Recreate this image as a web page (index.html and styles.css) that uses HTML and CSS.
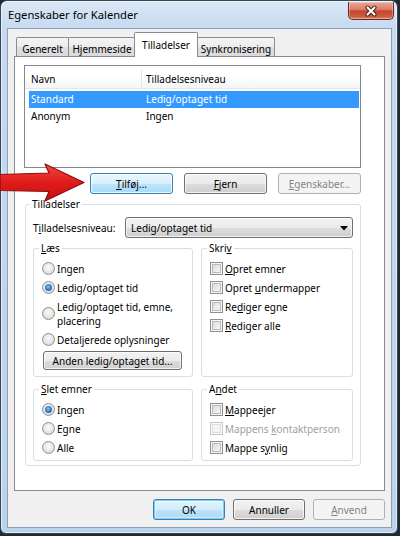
FILE: index.html
```html
<!DOCTYPE html>
<html lang="da">
<head>
<meta charset="utf-8">
<title>Egenskaber for Kalender</title>
<link rel="stylesheet" href="styles.css">
</head>
<body>
<div class="window">
  <div class="titlebar">
    <span class="title">Egenskaber for Kalender</span>
    <div class="close">
      <svg width="14" height="12" viewBox="0 0 14 12">
        <path d="M3.5 2.5 L10.5 9.5 M10.5 2.5 L3.5 9.5" stroke="#4a1710" stroke-width="4" stroke-linecap="round"/>
        <path d="M3.5 2.5 L10.5 9.5 M10.5 2.5 L3.5 9.5" stroke="#ffffff" stroke-width="2.2" stroke-linecap="round"/>
      </svg>
    </div>
  </div>
  <div class="client">
    <div class="tabs">
      <div class="tab t1">Generelt</div>
      <div class="tab t2">Hjemmeside</div>
      <div class="tab t3 active">Tilladelser</div>
      <div class="tab t4">Synkronisering</div>
    </div>
    <div class="panel">
      <div class="list">
        <div class="list-head">
          <span class="hcol1">Navn</span>
          <span class="hcol2">Tilladelsesniveau</span>
        </div>
        <div class="rows">
          <div class="row selected"><span class="col1">Standard</span><span class="col2">Ledig/optaget tid</span></div>
          <div class="row"><span class="col1">Anonym</span><span class="col2">Ingen</span></div>
        </div>
      </div>
      <div class="list-buttons">
        <span class="btn hot"><span><u>T</u>ilføj...</span></span>
        <span class="btn"><span><u>F</u>jern</span></span>
        <span class="btn disabled"><span><u>E</u>genskaber...</span></span>
      </div>
      <fieldset class="group perms">
        <legend>Tilladelser</legend>
        <div class="level-row">
          <span class="level-label">T<u>i</u>lladelsesniveau:</span>
          <div class="select">
            <span>Ledig/optaget tid</span>
            <svg class="caret" width="8" height="5" viewBox="0 0 8 5"><path d="M0 0 H8 L4 4.5 Z" fill="#000"/></svg>
          </div>
        </div>
        <div class="cols">
          <fieldset class="group sub les">
            <legend><u>L</u>æs</legend>
            <div class="opt"><span class="radio"></span><span>Ingen</span></div>
            <div class="opt"><span class="radio on"></span><span>Ledig/optaget tid</span></div>
            <div class="opt multi"><span class="radio"></span><span class="ml">Ledig/optaget tid, emne,<br>placering</span></div>
            <div class="opt"><span class="radio"></span><span>Detaljerede oplysninger</span></div>
            <span class="btn other"><span>Anden ledig/optaget tid...</span></span>
          </fieldset>
          <fieldset class="group sub">
            <legend>Skri<u>v</u></legend>
            <div class="opt"><span class="check"></span><span><u>O</u>pret emner</span></div>
            <div class="opt"><span class="check"></span><span>Opret <u>u</u>ndermapper</span></div>
            <div class="opt"><span class="check"></span><span>Re<u>d</u>iger egne</span></div>
            <div class="opt"><span class="check"></span><span><u>R</u>ediger alle</span></div>
          </fieldset>
        </div>
        <div class="cols second">
          <fieldset class="group sub low">
            <legend><u>S</u>let emner</legend>
            <div class="opt"><span class="radio on"></span><span>Ingen</span></div>
            <div class="opt"><span class="radio"></span><span>Egne</span></div>
            <div class="opt"><span class="radio"></span><span>Alle</span></div>
          </fieldset>
          <fieldset class="group sub low">
            <legend>A<u>n</u>det</legend>
            <div class="opt"><span class="check"></span><span><u>M</u>appeejer</span></div>
            <div class="opt off"><span class="check"></span><span>Mappens <u>k</u>ontaktperson</span></div>
            <div class="opt"><span class="check"></span><span>Mappe s<u>y</u>nlig</span></div>
          </fieldset>
        </div>
      </fieldset>
    </div>
    <div class="dialog-buttons">
      <span class="btn default"><span>OK</span></span>
      <span class="btn"><span>Annuller</span></span>
      <span class="btn disabled"><span><u>A</u>nvend</span></span>
    </div>
  </div>
  <svg class="arrow" width="88" height="42" viewBox="0 0 88 42">
    <defs>
      <linearGradient id="ag" x1="0" y1="0" x2="0" y2="1">
        <stop offset="0" stop-color="#f04a3e"/>
        <stop offset="0.5" stop-color="#e01b1b"/>
        <stop offset="1" stop-color="#c41010"/>
      </linearGradient>
    </defs>
    <polygon points="0,12.5 49,11 45,2 84,20.5 45,39 49,29.5 0,28.5" fill="url(#ag)" stroke="#8d0d0d" stroke-width="1.2" stroke-linejoin="round"/>
  </svg>
</div>
</body>
</html>
```
FILE: styles.css
```css
* { box-sizing: border-box; }
html, body { margin: 0; padding: 0; }
body {
  width: 400px;
  height: 536px;
  overflow: hidden;
  background: #1f2a35;
  font-family: "Noto Sans", "Open Sans", sans-serif;
  font-size: 10px;
  color: #000;
  white-space: nowrap;
}
u { text-decoration: underline; text-underline-offset: 1px; }

.window {
  position: relative;
  width: 398px;
  height: 534px;
  border: 1px solid #34475c;
  border-radius: 7px 7px 6px 6px;
  background: linear-gradient(180deg, #dbe8f6 0, #c6d9ef 28px, #bdd3ec 100%);
  box-shadow: inset 0 0 0 1px rgba(255, 255, 255, 0.55);
  padding: 0 5px 5px 6px;
}

.titlebar {
  height: 27px;
  display: flex;
  align-items: flex-start;
}
.title {
  font-size: 11.2px;
  line-height: 16px;
  padding: 6px 0 0 1px;
  color: #000;
}
.close {
  margin: 1px -2px 0 auto;
  width: 46px;
  height: 18px;
  border: 1px solid #6b2a21;
  border-top: none;
  border-radius: 0 0 5px 5px;
  background: linear-gradient(180deg, #e9aa98 0, #d97d66 45%, #c4472d 52%, #cf5a3f 85%, #e08a6c 100%);
  box-shadow: inset 0 0 0 1px rgba(255, 255, 255, 0.3);
  display: flex;
  align-items: center;
  justify-content: center;
}

.client {
  height: 500px;
  border: 1px solid #8ba1b9;
  background: #f0f0f0;
  padding: 3px 6px 0 6px;
}

.tabs {
  position: relative;
  z-index: 2;
  display: flex;
  align-items: flex-end;
  height: 24px;
  padding-left: 2px;
}
.tab {
  height: 19px;
  border: 1px solid #898c95;
  border-bottom: none;
  border-radius: 2px 2px 0 0;
  background: linear-gradient(180deg, #f4f4f4 0, #ececec 50%, #e1e1e1 51%, #dadada 100%);
  text-align: center;
  line-height: 16px;
  padding-top: 3px;
  margin-right: -1px;
}
.t1 { width: 53px; }
.t2 { width: 68px; }
.t3 { width: 64px; }
.t4 { width: 78px; }
.tab.active {
  position: relative;
  z-index: 3;
  height: 25px;
  margin-left: -1px;
  margin-bottom: -1px;
  background: #fff;
  padding-top: 4px;
}

.panel {
  position: relative;
  z-index: 1;
  width: 371px;
  height: 435px;
  background: #fff;
  border: 1px solid #898c95;
  padding: 8px 0 0 9px;
}

.list {
  width: 337px;
  height: 103px;
  border: 1px solid #828790;
  background: #fff;
}
.list-head {
  display: flex;
  height: 23px;
  background: linear-gradient(180deg, #ffffff 0, #ffffff 45%, #f4f5f7 100%);
  border-bottom: 1px solid #e6e8eb;
  line-height: 19px;
  padding-top: 4px;
}
.hcol1 {
  width: 117px;
  padding-left: 6px;
  border-right: 1px solid #e3e5e8;
}
.hcol2 { padding-left: 4px; }
.rows { padding: 2px 1px 0 4px; }
.row {
  display: flex;
  height: 17px;
  line-height: 17px;
}
.row.selected { background: #3399ff; color: #fff; }
.col1 { width: 113px; padding-left: 2px; }
.col2 { padding-left: 4px; }

.btn {
  display: flex;
  align-items: center;
  justify-content: center;
  height: 21px;
  border: 1px solid #707070;
  border-radius: 3px;
  background: linear-gradient(180deg, #f2f2f2 0, #ebebeb 50%, #dddddd 51%, #cfcfcf 100%);
  box-shadow: inset 0 0 0 1px rgba(255, 255, 255, 0.75);
  line-height: 14px;
}
.btn.hot {
  border-color: #3c7fb1;
  background: linear-gradient(180deg, #eaf6fd 0, #d9f0fc 50%, #bee6fd 51%, #a7d9f5 100%);
}
.btn.default {
  border-color: #3c7fb1;
  background: linear-gradient(180deg, #e4f4fc 0, #d2ecf9 50%, #bde3f7 51%, #aed9f1 100%);
  box-shadow: inset 0 0 0 1px #6cd3f7, inset 0 0 0 2px rgba(255, 255, 255, 0.4);
}
.btn.disabled {
  border-color: #adb2b5;
  background: #f4f4f4;
  color: #838383;
  box-shadow: none;
}

.list-buttons {
  display: flex;
  justify-content: flex-end;
  gap: 11px;
  width: 337px;
  margin-top: 5px;
}
.list-buttons .btn { width: 83px; }

fieldset {
  margin: 0;
  min-width: 0;
  border: 1px solid #d5dfe5;
  border-radius: 3px;
}
legend {
  padding: 0 2px;
  margin-left: -3px;
  line-height: 14px;
}

.perms {
  width: 336px;
  margin: 3px 0 0 1px;
  padding: 6px 7px 4px 7px;
}
.level-row {
  display: flex;
  align-items: center;
  height: 21px;
}
.level-label { width: 92px; }
.select {
  width: 228px;
  height: 21px;
  display: flex;
  align-items: center;
  padding-left: 5px;
  border: 1px solid #707070;
  border-radius: 3px;
  background: linear-gradient(180deg, #f2f2f2 0, #ebebeb 50%, #dddddd 51%, #cfcfcf 100%);
  box-shadow: inset 0 0 0 1px rgba(255, 255, 255, 0.7);
}
.caret { margin: 1px 4px 0 auto; }

.cols {
  display: grid;
  grid-template-columns: 160px 152px;
  gap: 8px;
  margin-top: 3px;
}
.cols.second { margin-top: 5px; }
.sub { padding: 4px 8px 6px 8px; }
.sub.low { padding-bottom: 3px; }

.opt {
  display: flex;
  align-items: center;
  height: 19px;
}
.opt.multi { height: 33px; }
.ml { line-height: 14px; }
.opt.off { color: #a0a0a0; }

.radio {
  flex: none;
  display: flex;
  align-items: center;
  justify-content: center;
  width: 13px;
  height: 13px;
  margin-right: 2px;
  border: 1px solid #8e8f8f;
  border-radius: 50%;
  background: radial-gradient(circle at 50% 40%, #fbfbfb 0, #e9e9e9 45%, #cfcfcf 100%);
}
.radio.on::after {
  content: "";
  width: 7px;
  height: 7px;
  border-radius: 50%;
  background: radial-gradient(circle at 45% 40%, #8ec3f0 0, #3b82cf 45%, #1d4f95 100%);
}
.check {
  flex: none;
  width: 13px;
  height: 13px;
  margin-right: 2px;
  border: 1px solid #8e8f8f;
  background: linear-gradient(135deg, #cdd1d6 0, #eeeeee 60%, #f8f8f8 100%);
  box-shadow: inset 0 0 0 1px #f6f6f6, inset 0 0 0 2px #b7bbc0;
}
.opt.off .check {
  border-color: #c6c6c6;
  background: #f4f4f4;
  box-shadow: inset 0 0 0 1px #fafafa, inset 0 0 0 2px #dedede;
}

.btn.other {
  width: 139px;
  height: 19px;
  margin: 2px 0 0 1px;
}

.dialog-buttons {
  display: flex;
  justify-content: flex-end;
  gap: 8px;
  width: 371px;
  margin-top: 8px;
}
.dialog-buttons .btn { width: 72px; }

.arrow {
  position: absolute;
  left: -1px;
  top: 161px;
  z-index: 5;
}
```
